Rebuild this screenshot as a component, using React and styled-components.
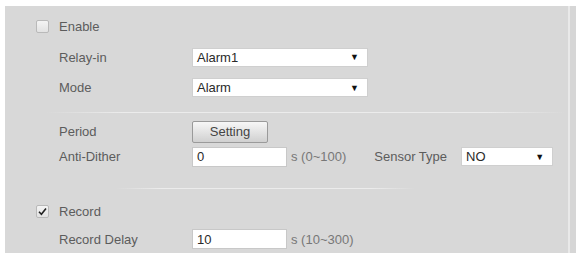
import React from "react";
import styled, { createGlobalStyle } from "styled-components";

const GlobalStyle = createGlobalStyle`
  html, body {
    margin: 0;
    padding: 0;
    background: #ffffff;
  }
  body {
    font-family: "Liberation Sans", Arial, sans-serif;
    font-size: 13px;
    color: #5a5a5a;
  }
`

const Page = styled.div`
  padding: 6px 0 0 5px;
  width: 576px;
  height: 253px;
  box-sizing: border-box;
  overflow: hidden;
`

const Panel = styled.div`
  height: 247px;
  box-sizing: border-box;
  padding: 4px 0 0 31px;
  background: linear-gradient(to right, #d8d8d8 0, #d8d8d8 563px, #e9e9e9 563px, #e9e9e9 565px, #d6d6d6 565px);
`

const Row = styled.div`
  display: flex;
  align-items: center;
  height: ${p => p.$h || 25}px;
  padding-left: ${p => (p.$check ? 0 : 23)}px;
`

const Label = styled.div`
  width: 133px;
  flex-shrink: 0;
  color: #5c5c5c;
`

const CheckLabel = styled.label`
  display: flex;
  align-items: center;
  gap: 10px;
  color: #5c5c5c;
`

const Box = styled.span`
  width: 11px;
  height: 11px;
  border: 1px solid #b9b9b9;
  border-radius: 2px;
  background: linear-gradient(#f4f4f4, #e2e2e2);
  display: flex;
  align-items: center;
  justify-content: center;
`

const Select = styled.div`
  width: ${p => p.$w}px;
  height: 19px;
  box-sizing: border-box;
  background: #ffffff;
  border: 1px solid #cfcfcf;
  display: flex;
  align-items: center;
  justify-content: space-between;
  padding: 0 8px 0 4px;
  color: #2a2a2a;
  font-size: 13px;
`

const Arrow = styled.span`
  font-size: 9px;
  color: #111;
`

const Input = styled.div`
  width: ${p => p.$w}px;
  height: 20px;
  box-sizing: border-box;
  background: #ffffff;
  border: 1px solid #c8c8c8;
  display: flex;
  align-items: center;
  padding-left: 4px;
  color: #2a2a2a;
`

const Hint = styled.span`
  margin-left: 4px;
  font-size: 13px;
  color: #777;
`

const SensorLabel = styled.span`
  margin-left: 28px;
  margin-right: 14px;
  color: #5c5c5c;
`

const Button = styled.div`
  width: 76px;
  height: 22px;
  box-sizing: border-box;
  border: 1px solid #9a9a9a;
  border-radius: 2px;
  background: linear-gradient(#f7f7f7, #d0d0d0);
  display: flex;
  align-items: center;
  justify-content: center;
  color: #444;
`

const Divider = styled.div`
  height: 1px;
  margin: ${p => p.$m};
  width: ${p => p.$w}px;
  background: linear-gradient(to right, rgba(240,240,240,0), #ececec 15%, #ececec 85%, rgba(240,240,240,0));
`

const Check = ({ checked }) => (
  <Box>
    {checked && (
      <svg width="9" height="9" viewBox="0 0 9 9">
        <path d="M1 4.8 L3.4 7.2 L8 1.6" fill="none" stroke="#222" strokeWidth="1.6" />
      </svg>
    )}
  </Box>
)

const App = () => {
  return (
    <Page>
      <GlobalStyle />
      <Panel>
        <Row $check $h={32}>
          <CheckLabel><Check />Enable</CheckLabel>
        </Row>
        <Row $h={30}>
          <Label>Relay-in</Label>
          <Select $w={176}>Alarm1<Arrow>▼</Arrow></Select>
        </Row>
        <Row $h={31}>
          <Label>Mode</Label>
          <Select $w={176}>Alarm<Arrow>▼</Arrow></Select>
        </Row>
        <Divider $w={520} $m="9px 0 6px 10px" />
        <Row $h={25}>
          <Label>Period</Label>
          <Button>Setting</Button>
        </Row>
        <Row $h={25}>
          <Label>Anti-Dither</Label>
          <Input $w={95}>0</Input>
          <Hint>s (0~100)</Hint>
          <SensorLabel>Sensor Type</SensorLabel>
          <Select $w={92}>NO<Arrow>▼</Arrow></Select>
        </Row>
        <Divider $w={300} $m="19px 0 10px 80px" />
        <Row $check $h={25}>
          <CheckLabel><Check checked />Record</CheckLabel>
        </Row>
        <Row $h={30}>
          <Label>Record Delay</Label>
          <Input $w={95}>10</Input>
          <Hint>s (10~300)</Hint>
        </Row>
      </Panel>
    </Page>
  )
}

export default App;
